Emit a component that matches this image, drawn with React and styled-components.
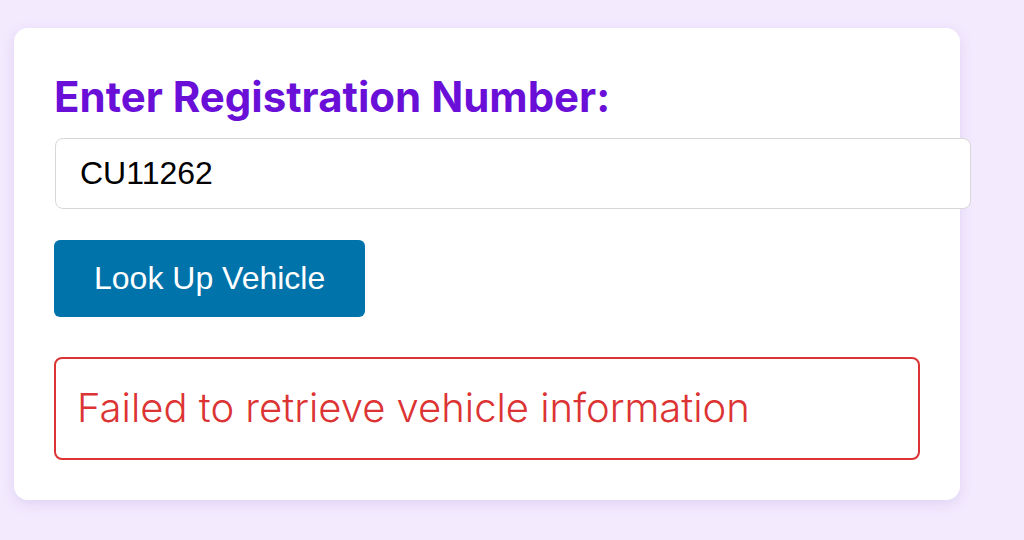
import { useState } from "react";
import styled, { createGlobalStyle } from "styled-components";

const GlobalStyle = createGlobalStyle`
  html, body {
    margin: 0;
    background: #f3eafe;
  }
  body {
    font-family: "Liberation Sans", Arial, sans-serif;
  }
`;

export default function App() {
  const [registration, setRegistration] = useState("CU11262");
  const [error] = useState("Failed to retrieve vehicle information");

  return (
    <>
      <GlobalStyle />
      <Page>
        <Card>
          <Label htmlFor="reg">Enter Registration Number:</Label>
          <Input
            id="reg"
            value={registration}
            onChange={(e) => setRegistration(e.target.value)}
          />
          <Button type="button">Look Up Vehicle</Button>
          {error && <ErrorBox>{error}</ErrorBox>}
        </Card>
      </Page>
    </>
  );
}

const Page = styled.main`
  padding: 28px 14px;
`;

const Card = styled.section`
  width: 946px;
  box-sizing: border-box;
  padding: 40px;
  background: #ffffff;
  border-radius: 14px;
  box-shadow: 0 4px 14px rgba(110, 70, 170, 0.14);
  display: flex;
  flex-direction: column;
  align-items: flex-start;
`;

const Label = styled.label`
  font-family: Inter, "Noto Sans", sans-serif;
  font-weight: 700;
  font-size: 42px;
  line-height: 58px;
  color: #6a0fd7;
  margin-bottom: 12px;
`;

const Input = styled.input`
  box-sizing: content-box;
  width: 100%;
  padding: 16px 24px;
  margin: 0 0 0 1px;
  border: 1px solid #d8d8d8;
  border-radius: 8px;
  font-family: "Liberation Sans", Arial, sans-serif;
  font-size: 32px;
  line-height: 37px;
  height: 37px;
  color: #000;
  outline: none;
`;

const Button = styled.button`
  margin-top: 31px;
  padding: 20px 40px;
  border: none;
  border-radius: 6px;
  background: #0073ab;
  color: #ffffff;
  font-family: "Liberation Sans", Arial, sans-serif;
  font-size: 32px;
  line-height: 37px;
  cursor: pointer;
`;

const ErrorBox = styled.div`
  align-self: stretch;
  margin-top: 40px;
  padding: 25px 21px 26px;
  border: 2px solid #dc3434;
  border-radius: 8px;
  font-family: Inter, "Noto Sans", sans-serif;
  font-weight: 300;
  font-size: 40px;
  line-height: 48px;
  color: #dc3434;
`;
